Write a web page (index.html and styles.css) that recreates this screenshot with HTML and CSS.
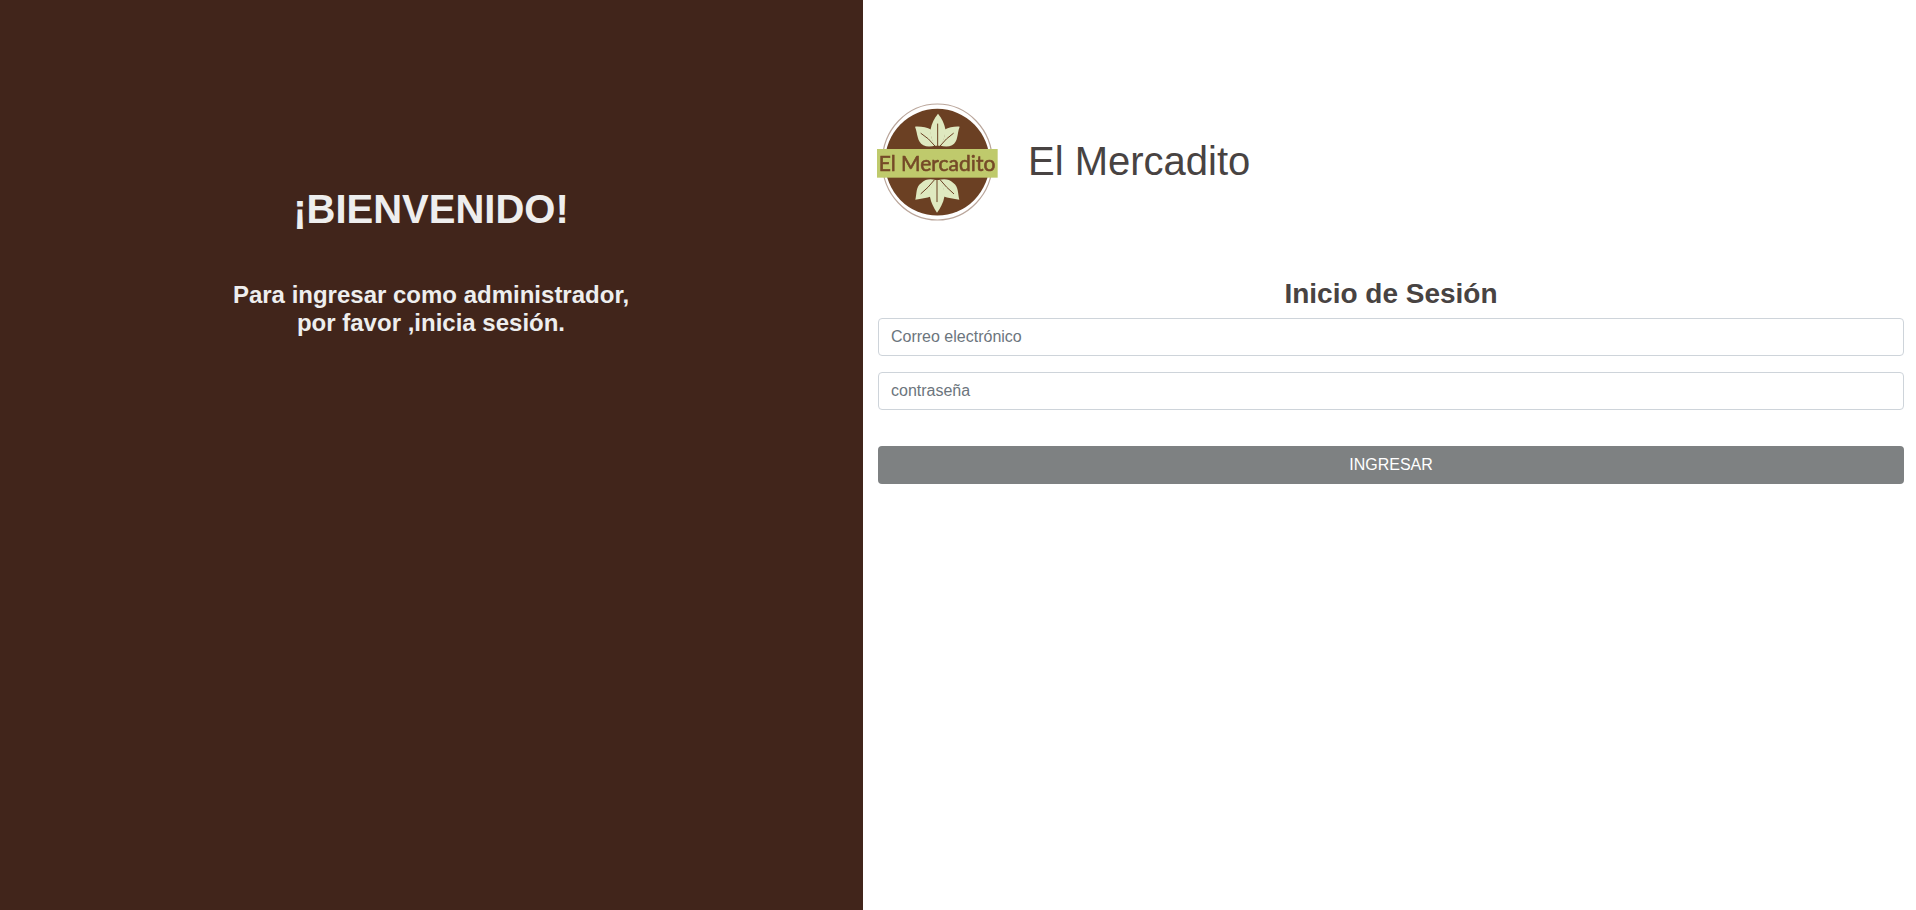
FILE: index.html
```html
<!DOCTYPE html>
<html lang="es">
<head>
<meta charset="utf-8">
<title>El Mercadito</title>
<link rel="stylesheet" href="styles.css">
</head>
<body>
<main class="page">
  <section class="welcome">
    <h1 class="welcome-title">¡BIENVENIDO!</h1>
    <h4 class="welcome-text">Para ingresar como administrador,<br>por favor ,inicia sesión.</h4>
  </section>
  <section class="login">
    <header class="brand">
      <svg class="logo" viewBox="51 36 363 360" role="img" aria-label="El Mercadito">
        <ellipse cx="232" cy="216" rx="165" ry="174" fill="#fff" stroke="#baa69b" stroke-width="3.500"/>
        <ellipse cx="232" cy="216.500" rx="157" ry="160" fill="#6b4023"/>
        <g fill="#dfe9c0">
          <path d="M165 110C184 109 200 112 214 119C209 137 218 153 228 166C213 171 200 171 190 166C170 153 174 133 165 110Z"/>
          <path d="M299 110C282 109 268 112 253 119C258 137 249 153 238 166C253 171 266 171 276 166C296 153 290 133 299 110Z"/>
          <path d="M234 71C245 85 253 100 256 117C257 137 250 154 240 167H226C216 153 210 137 212 117C215 100 223 85 234 71Z"/>
          <path d="M166 329C171 309 167 291 184 279C197 267 210 266 227 270C217 285 209 300 215 319C199 325 184 326 166 329Z"/>
          <path d="M298 329C293 309 296 291 280 279C267 267 254 266 236 270C247 285 256 300 249 319C265 325 280 326 298 329Z"/>
          <path d="M231 368C221 353 213 338 210 321C208 302 215 285 225 270H239C249 285 255 302 253 321C250 338 242 353 231 368Z"/>
        </g>
        <g fill="none" stroke="#6b4023" stroke-width="3" stroke-linecap="round">
          <path d="M183 130Q207 145 224 167"/>
          <path d="M280 130Q258 145 241 167"/>
          <path d="M233 102V168"/>
          <path d="M183 311Q205 293 223 270"/>
          <path d="M281 311Q259 293 241 270"/>
          <path d="M231 335V270"/>
        </g>
        <rect x="51" y="177" width="362" height="86" fill="#bfca6c"/>
        <text class="logo-text" x="56" y="242" textLength="350" lengthAdjust="spacingAndGlyphs">El Mercadito</text>
      </svg>
      <h1 class="brand-name">El Mercadito</h1>
    </header>
    <form class="login-form">
      <h3 class="form-title">Inicio de Sesión</h3>
      <input class="field" type="email" placeholder="Correo electrónico">
      <input class="field" type="password" placeholder="contraseña">
      <button class="submit" type="button">INGRESAR</button>
    </form>
  </section>
</main>
</body>
</html>
```

FILE: styles.css
```css
* {
  box-sizing: border-box;
}

body {
  margin: 0;
  background: #fff;
  color: #484342;
  font-family: "Liberation Sans", Arial, sans-serif;
  font-size: 16px;
  line-height: 1.5;
}

h1, h3, h4 {
  margin: 0;
  line-height: 1.2;
}

.page {
  display: grid;
  grid-template-columns: 863px 1fr;
  height: 100vh;
}

.welcome {
  padding: 185px 1px 0 0;
  background: #41251b;
  color: #eee;
  text-align: center;
}

.welcome-title {
  font-size: 40px;
}

.welcome-text {
  margin-top: 48px;
  font-size: 24px;
  line-height: 28px;
}

.login {
  padding: 102px 12px 0 14px;
}

.brand {
  display: flex;
  height: 120px;
  gap: 30px;
}

.logo {
  width: 121px;
  height: 120px;
  overflow: visible;
  filter: blur(0.4px);
}

.logo-text {
  font-family: Lato, sans-serif;
  font-size: 65px;
  fill: #754a28;
  stroke: #754a28;
  stroke-width: 1.8;
}

.brand-name {
  margin-top: 35px;
  font-size: 40px;
  font-weight: 400;
}

.login-form {
  display: flex;
  flex-direction: column;
  padding: 55px 0 0 1px;
}

.form-title {
  height: 33px;
  margin-bottom: 8px;
  font-size: 28px;
  text-align: center;
}

.field {
  height: 38px;
  margin-bottom: 16px;
  padding: 6px 12px;
  border: 1px solid #ced4da;
  border-radius: 4px;
  background: #fff;
  font: inherit;
}

.field::placeholder {
  color: #6c757d;
  opacity: 1;
}

.submit {
  height: 38px;
  margin-top: 20px;
  padding: 6px 12px;
  border: 0;
  border-radius: 4px;
  background: #7e8182;
  color: #fff;
  font: inherit;
}
```
